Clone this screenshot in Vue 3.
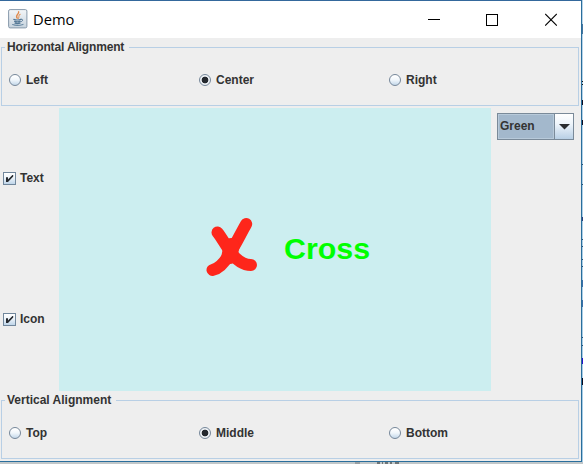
<script setup>
import { ref } from 'vue'

const groups = {
  h: { title: 'Horizontal Alignment', options: ['Left', 'Center', 'Right'] },
  v: { title: 'Vertical Alignment', options: ['Top', 'Middle', 'Bottom'] }
}
const picked = ref({ h: 'Center', v: 'Middle' })
const checks = ref([
  { label: 'Text', on: true },
  { label: 'Icon', on: true }
])
const color = ref('Green')
// Slivers of the window behind, visible along the right edge
const slivers = [
  { y: 24, h: 10, c: '#46759f' },
  { y: 81, h: 1, c: '#111' }, { y: 84, h: 1, c: '#111' },
  { y: 100, h: 5, c: '#0b0b20' }, { y: 120, h: 5, c: '#0b0b20' },
  { y: 164, h: 1, c: '#285074' }, { y: 184, h: 1, c: '#285074' },
  { y: 217, h: 4, c: '#2c3d78' }, { y: 239, h: 1, c: '#285074' },
  { y: 246, h: 1, c: '#285074' }, { y: 259, h: 1, c: '#285074' },
  { y: 266, h: 1, c: '#285074' }, { y: 280, h: 7, c: '#3b6fa8' },
  { y: 300, h: 7, c: '#3b6fa8' }, { y: 337, h: 1, c: '#285074' },
  { y: 345, h: 1, c: '#285074' }, { y: 358, h: 6, c: '#2310c8' },
  { y: 378, h: 7, c: '#08081c' }
]
</script>

<template>
  <div class="desktop">
    <span v-for="s in slivers" :key="s.y" class="sliver" :style="{ top: s.y + 'px', height: s.h + 'px', background: s.c }"></span>
    <svg class="behind" width="583" height="2" viewBox="0 0 583 2">
      <rect width="583" height="2" fill="#c1c7c9" />
      <path d="M355 1H360" stroke="#9aa0a3" stroke-width="2" />
      <path d="M377 1H380M382 1H383M385 1H388M390 1H392M395 1H399" stroke="#6f7577" stroke-width="2" />
    </svg>
    <div class="window">
      <header class="titlebar">
        <svg class="java" width="20" height="20" viewBox="0 0 20 20">
          <defs>
            <linearGradient id="jbg" x1="0" y1="0" x2="0" y2="1">
              <stop offset="0" stop-color="#f4f6f8" /><stop offset="1" stop-color="#c6d3de" />
            </linearGradient>
          </defs>
          <rect x="0.6" y="0.6" width="18.3" height="18.3" rx="1.5" fill="url(#jbg)" stroke="#8799aa" />
          <g fill="none" stroke-linecap="round">
            <path d="M10.6 2.8C11.5 5 6.8 5.8 9.2 9.2" stroke="#e08a4c" stroke-width="1.4" />
            <path d="M12.2 5.2C9.6 6.4 11.8 7.6 10.4 9.4" stroke="#e39a65" stroke-width="1.1" />
            <path d="M5.8 10.4Q9.4 11.6 13 10.4M6.6 12.4Q9.5 13.4 12.2 12.4M7 14.1Q9.5 15 12 14.1" stroke="#547896" stroke-width="1.2" />
            <path d="M13.2 10.2C15.6 9.8 15 12.4 12.9 12.8" stroke="#547896" />
            <path d="M4.6 15.6Q9.5 17.3 15 15.4" stroke="#6989a3" stroke-width="1.1" />
          </g>
        </svg>
        <h1>Demo</h1>
        <div class="controls">
          <svg width="12" height="13" viewBox="0 0 12 13"><path d="M0 6.5H12" stroke="#000" /></svg>
          <svg width="12" height="13" viewBox="0 0 12 13"><rect x="0.5" y="1.5" width="11" height="11" fill="none" stroke="#000" /></svg>
          <svg class="close" width="12" height="13" viewBox="0 0 12 13"><path d="M0.2 1L11.8 12.6M11.8 1L0.2 12.6" stroke="#000" stroke-width="1.1" /></svg>
        </div>
      </header>

      <section class="group top">
        <h2>{{ groups.h.title }}</h2>
        <div class="options">
          <label v-for="o in groups.h.options" :key="o" @click="picked.h = o">
            <span class="radio" :class="{ on: picked.h === o }"></span>{{ o }}
          </label>
        </div>
      </section>

      <main class="middle">
        <aside class="checks">
          <label v-for="c in checks" :key="c.label" @click="c.on = !c.on">
            <span class="box">
              <svg v-if="c.on" width="11" height="11" viewBox="0 0 11 11"><path d="M2 4.2H4V6.4L8.4 2H9.2V3.4L4 9H2Z" fill="#25292e" /></svg>
            </span>{{ c.label }}
          </label>
        </aside>
        <div class="canvas">
          <svg v-if="checks[1].on" class="cross" width="54" height="62" viewBox="205 216 54 62">
            <g fill="none" stroke="#fe261b" stroke-linecap="round" stroke-linejoin="round">
              <path d="M246.2 224C241 233 237 242 230 253C225 262 219 268.5 212.5 270" stroke-width="12" />
              <path d="M217.5 232.5C222 238 226 246 230 251C236 260 242 265 251 265" stroke-width="12" />
              <path d="M231.5 246L229.5 256" stroke-width="16" />
            </g>
          </svg>
          <span v-if="checks[0].on" class="word">Cross</span>
        </div>
        <aside class="side">
          <div class="combo">
            <span class="value">{{ color }}</span>
            <span class="arrow"><svg width="11" height="6" viewBox="0 0 11 6"><path d="M0 0H11L5.5 5.5Z" fill="#2b2d30" /></svg></span>
          </div>
        </aside>
      </main>

      <section class="group bottom">
        <h2>{{ groups.v.title }}</h2>
        <div class="options">
          <label v-for="o in groups.v.options" :key="o" @click="picked.v = o">
            <span class="radio" :class="{ on: picked.v === o }"></span>{{ o }}
          </label>
        </div>
      </section>
    </div>
  </div>
</template>

<style>
body { margin: 0; overflow: hidden; }
</style>

<style scoped>
* { box-sizing: border-box; }
.desktop {
  position: relative;
  width: 583px;
  height: 464px;
  overflow: hidden;
  background: linear-gradient(#b9d4e8, #a5cbe4);
  font: bold 12px/14px "Liberation Sans", Arial, sans-serif;
  color: #333;
}
.sliver { position: absolute; left: 582px; width: 1px; }
.behind { position: absolute; left: 0; top: 462px; }
.window {
  position: relative;
  width: 582px;
  height: 462px;
  display: flex;
  flex-direction: column;
  background: #eee;
  border: solid #2a6e9c;
  border-width: 1px 1px 1px 0;
  border-top-color: #34689c;
}
.titlebar {
  height: 37px;
  flex: none;
  display: flex;
  align-items: center;
  padding: 0 24px 0 8px;
  background: #fff;
}
.java { margin-top: -1px; }
h1 {
  margin: -2px 0 0 5px;
  font: 14.7px/20px "Open Sans", "Noto Sans", sans-serif;
  color: #000;
}
.controls { margin-left: auto; margin-top: -1px; display: flex; gap: 46px; }
.controls svg { display: block; }
.controls .close { margin-left: 1px; }
.group {
  position: relative;
  flex: none;
  height: 59px;
  width: 578px;
  margin-left: 1px;
  border: 1px solid #b8cfe5;
}
.group.top { margin-top: 9px; }
.group.bottom { margin-top: 9px; }
h2 {
  position: absolute;
  left: 3px;
  top: -8px;
  margin: 0;
  padding: 0 5px 0 2px;
  background: #eee;
  font-size: 12px;
  line-height: 14px;
  white-space: nowrap;
}
.top h2 { letter-spacing: -0.15px; }
.options {
  height: 100%;
  display: grid;
  grid-template-columns: repeat(3, 190px);
  align-items: center;
  padding: 7px 0 0 7px;
}
label { display: flex; align-items: center; }
.radio {
  width: 12px;
  height: 12px;
  margin-right: 5px;
  border: 1px solid #76879a;
  border-radius: 50%;
  background: linear-gradient(#fff 10%, #f0f6fb 50%, #c4d8ea);
}
.radio.on { background: radial-gradient(circle, #24282e 0 3px, #edf1f5 3.7px); }
.middle { display: flex; height: 283px; margin-top: 2px; flex: none; }
.checks {
  width: 59px;
  padding: 63px 0 0 3px;
  display: flex;
  flex-direction: column;
  gap: 127px;
}
.box {
  width: 13px;
  height: 13px;
  margin-right: 4px;
  border: 1px solid #71879c;
  background: linear-gradient(#fff, #f0f6fb 40%, #bfd5e9);
}
.box svg { display: block; }
.canvas {
  width: 432px;
  display: flex;
  align-items: center;
  padding-left: 146px;
  background: #cceef0;
}
.cross { flex: none; margin-top: -5px; }
.word {
  margin: -3px 0 0 25px;
  font-size: 30.4px;
  line-height: 34px;
  color: #0f0;
}
.side { padding: 5px 0 0 6px; }
.combo {
  width: 77px;
  height: 27px;
  display: flex;
  border: 1px solid #7a8a99;
}
.value {
  flex: 1;
  padding: 4px 0 0 1px;
  background: #a3b8cc;
  border: 1px solid #b8cada;
}
.arrow {
  width: 19px;
  display: flex;
  align-items: center;
  justify-content: center;
  border-left: 1px solid #7a8a99;
  background: linear-gradient(#fff, #eef5fb 40%, #b8cfe5);
}
</style>
